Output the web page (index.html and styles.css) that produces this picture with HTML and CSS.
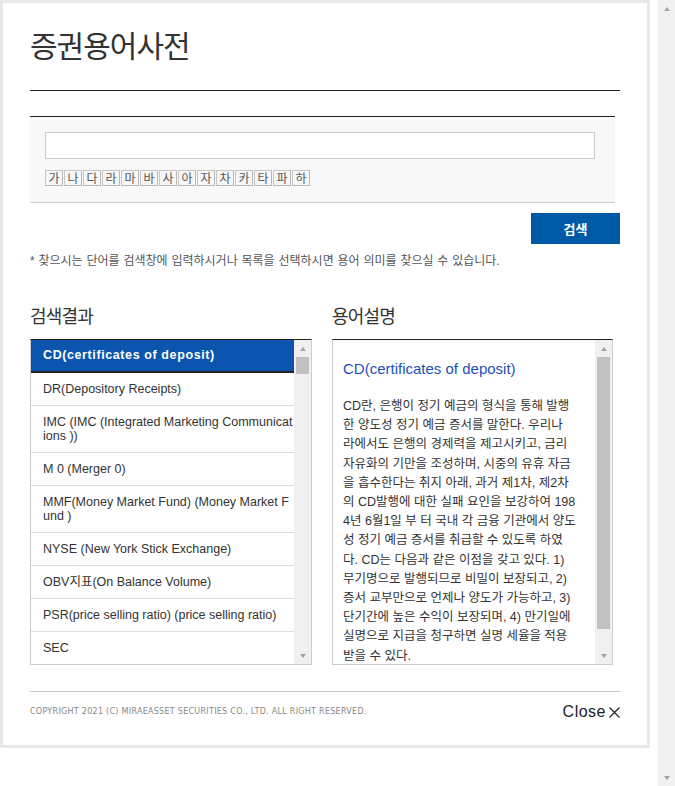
FILE: index.html
```html
<!DOCTYPE html>
<html lang="ko">
<head>
<meta charset="utf-8">
<title>증권용어사전</title>
<link rel="stylesheet" href="styles.css">
</head>
<body>
<div class="popup">
  <h1 class="title">증권용어사전</h1>

  <div class="search-box">
    <input class="search-input" type="text" title="검색어">
    <div class="index">
      <button class="index-btn">가</button><button class="index-btn">나</button><button class="index-btn">다</button><button class="index-btn">라</button><button class="index-btn">마</button><button class="index-btn">바</button><button class="index-btn">사</button><button class="index-btn">아</button><button class="index-btn">자</button><button class="index-btn">차</button><button class="index-btn">카</button><button class="index-btn">타</button><button class="index-btn">파</button><button class="index-btn">하</button>
    </div>
  </div>
  <div class="search-action"><button class="btn-search">검색</button></div>
  <p class="note">* 찾으시는 단어를 검색창에 입력하시거나 목록을 선택하시면 용어 의미를 찾으실 수 있습니다.</p>

  <div class="panels">
    <section class="panel panel-result">
      <h2 class="panel-title">검색결과</h2>
      <div class="box">
        <ul class="result-list">
          <li class="is-active">CD(certificates of deposit)</li>
          <li>DR(Depository Receipts)</li>
          <li>IMC (IMC (Integrated Marketing Communicat<br>ions ))</li>
          <li>M 0 (Merger 0)</li>
          <li>MMF(Money Market Fund) (Money Market F<br>und )</li>
          <li>NYSE (New York Stick Exchange)</li>
          <li>OBV지표(On Balance Volume)</li>
          <li>PSR(price selling ratio) (price selling ratio)</li>
          <li>SEC</li>
        </ul>
        <div class="vscroll">
          <span class="vscroll-arrow"></span>
          <span class="vscroll-track"><span class="vscroll-thumb thumb-short"></span></span>
          <span class="vscroll-arrow down"></span>
        </div>
      </div>
    </section>

    <section class="panel panel-desc">
      <h2 class="panel-title">용어설명</h2>
      <div class="box">
        <div class="desc">
          <h3 class="desc-title">CD(certificates of deposit)</h3>
          <p class="desc-text">CD란, 은행이 정기 예금의 형식을 통해 발행<br>한 양도성 정기 예금 증서를 말한다. 우리나<br>라에서도 은행의 경제력을 제고시키고, 금리<br>자유화의 기만을 조성하며, 시중의 유휴 자금<br>을 흡수한다는 취지 아래, 과거 제1차, 제2차<br>의 CD발행에 대한 실패 요인을 보강하여 198<br>4년 6월1일 부 터 국내 각 금융 기관에서 양도<br>성 정기 예금 증서를 취급할 수 있도록 하였<br>다. CD는 다음과 같은 이점을 갖고 있다. 1)<br>무기명으로 발행되므로 비밀이 보장되고, 2)<br>증서 교부만으로 언제나 양도가 가능하고, 3)<br>단기간에 높은 수익이 보장되며, 4) 만기일에<br>실명으로 지급을 청구하면 실명 세율을 적용<br>받을 수 있다.</p>
        </div>
        <div class="vscroll">
          <span class="vscroll-arrow"></span>
          <span class="vscroll-track"><span class="vscroll-thumb thumb-long"></span></span>
          <span class="vscroll-arrow down"></span>
        </div>
      </div>
    </section>
  </div>

  <div class="footer">
    <p class="copyright">COPYRIGHT 2021 (C) MIRAEASSET SECURITIES CO., LTD. ALL RIGHT RESERVED.</p>
    <button class="btn-close">Close<svg class="close-icon" width="11" height="11" viewBox="0 0 11 11" aria-hidden="true"><path d="M0.5 0.5L10.5 10.5M10.5 0.5L0.5 10.5" stroke="#222" stroke-width="1.2" fill="none"/></svg></button>
  </div>
</div>

<div class="page-scroll">
  <span class="vscroll-arrow page-up"></span>
  <span class="page-track"></span>
  <span class="vscroll-arrow down page-down"></span>
</div>
</body>
</html>
```

FILE: styles.css
```css
* { box-sizing: border-box; }
html, body { margin: 0; padding: 0; }
body {
  display: flex;
  justify-content: space-between;
  align-items: flex-start;
  height: 786px;
  overflow: hidden;
  background: #fff;
  font-family: "Liberation Sans", "Noto Sans CJK KR", sans-serif;
  color: #333;
}

.popup {
  width: 650px;
  height: 748px;
  border: 3px solid #e8e8e8;
  padding: 0 27px;
  display: flex;
  flex-direction: column;
}

.title {
  margin: 0;
  padding: 21px 0 26px;
  font: 400 30px/40px "Noto Sans CJK KR", sans-serif;
  letter-spacing: -1px;
  color: #333;
  border-bottom: 1px solid #222;
}

.search-box {
  margin: 25px 5px 0 0;
  background: #f8f8f8;
  border-top: 1px solid #222;
  border-bottom: 1px solid #ccc;
  padding: 15px 20px 16px 15px;
}
.search-input {
  display: block;
  width: 100%;
  height: 27px;
  margin: 0 0 11px;
  padding: 0 6px;
  border: 1px solid #ccc;
  background: #fff;
  outline: none;
}
.index { display: flex; gap: 1px; }
.index-btn {
  width: 18px;
  height: 16px;
  padding: 0;
  border: 1px solid #c6c6c6;
  border-right-color: #b8b8b8;
  border-bottom-color: #b8b8b8;
  background: #f7f7f7;
  font: 12px/14px "Noto Sans CJK KR", sans-serif;
  color: #555;
}

.search-action { display: flex; justify-content: flex-end; margin-top: 10px; }
.btn-search {
  width: 89px;
  height: 31px;
  padding: 0;
  border: 0;
  background: #0059a7;
  color: #fff;
  font: 700 13px/31px "Noto Sans CJK KR", sans-serif;
}

.note {
  margin: 9px 0 0;
  font-size: 12px;
  line-height: 16px;
  word-spacing: 0.5px;
  color: #555;
}

.panels { display: flex; gap: 20px; margin-top: 34px; }
.panel-result { width: 282px; }
.panel-desc { width: 281px; }
.panel-title {
  margin: 0 0 12px;
  font: 400 18px/24px "Noto Sans CJK KR", sans-serif;
  letter-spacing: -0.8px;
  color: #333;
}

.box {
  display: flex;
  height: 326px;
  border: 1px solid #ccc;
  border-top-color: #222;
  overflow: hidden;
}

.result-list {
  flex: 1;
  min-width: 0;
  margin: 0;
  padding: 0;
  list-style: none;
  overflow: hidden;
}
.result-list li {
  padding: 9px 12px;
  border-bottom: 1px solid #ddd;
  font-size: 12.5px;
  line-height: 14px;
  white-space: nowrap;
  overflow: hidden;
  color: #333;
}
.result-list li.is-active {
  padding: 8px 12px 9px;
  background: #0b55af;
  color: #fff;
  font-weight: 700;
  letter-spacing: 0.6px;
  border-bottom: 2px solid #222;
}

.vscroll {
  width: 17px;
  flex: none;
  background: #f0f0f0;
  display: flex;
  flex-direction: column;
}
.vscroll-arrow {
  height: 17px;
  flex: none;
  display: flex;
  align-items: center;
  justify-content: center;
}
.vscroll-arrow::before {
  content: "";
  border-left: 3.5px solid transparent;
  border-right: 3.5px solid transparent;
  border-bottom: 4px solid #a3a3a3;
}
.vscroll-arrow.down::before {
  border-bottom: 0;
  border-top: 4px solid #a3a3a3;
}
.vscroll-track { flex: 1; padding: 0 2px; display: block; }
.vscroll-thumb { display: block; background: #c1c1c1; }
.thumb-short { height: 17px; }
.thumb-long { height: 272px; }

.desc {
  flex: 1;
  min-width: 0;
  padding: 19px 10px 0;
  overflow: hidden;
}
.desc-title {
  margin: 0;
  font-size: 15px;
  line-height: 20px;
  font-weight: 400;
  color: #1d4fbb;
}
.desc-text {
  margin: 18px 0 0;
  font-size: 12.5px;
  line-height: 19.2px;
  white-space: nowrap;
  color: #333;
}

.footer {
  margin-top: 26px;
  padding-top: 10px;
  border-top: 1px solid #c8c8c8;
  display: flex;
  justify-content: space-between;
  align-items: center;
}
.copyright {
  margin: 0;
  font: 8px/20px "DejaVu Sans", sans-serif;
  letter-spacing: 0.28px;
  color: #888;
}
.btn-close {
  display: flex;
  align-items: center;
  gap: 3px;
  padding: 0;
  border: 0;
  background: none;
  font: 16px/20px "Liberation Sans", sans-serif;
  letter-spacing: 0.5px;
  color: #222;
}

.page-scroll {
  width: 17px;
  height: 786px;
  background: #f1f1f1;
  display: flex;
  flex-direction: column;
}
.page-track { flex: 1; }
.page-down::before { border-top-color: #c3c3c3; }
```
